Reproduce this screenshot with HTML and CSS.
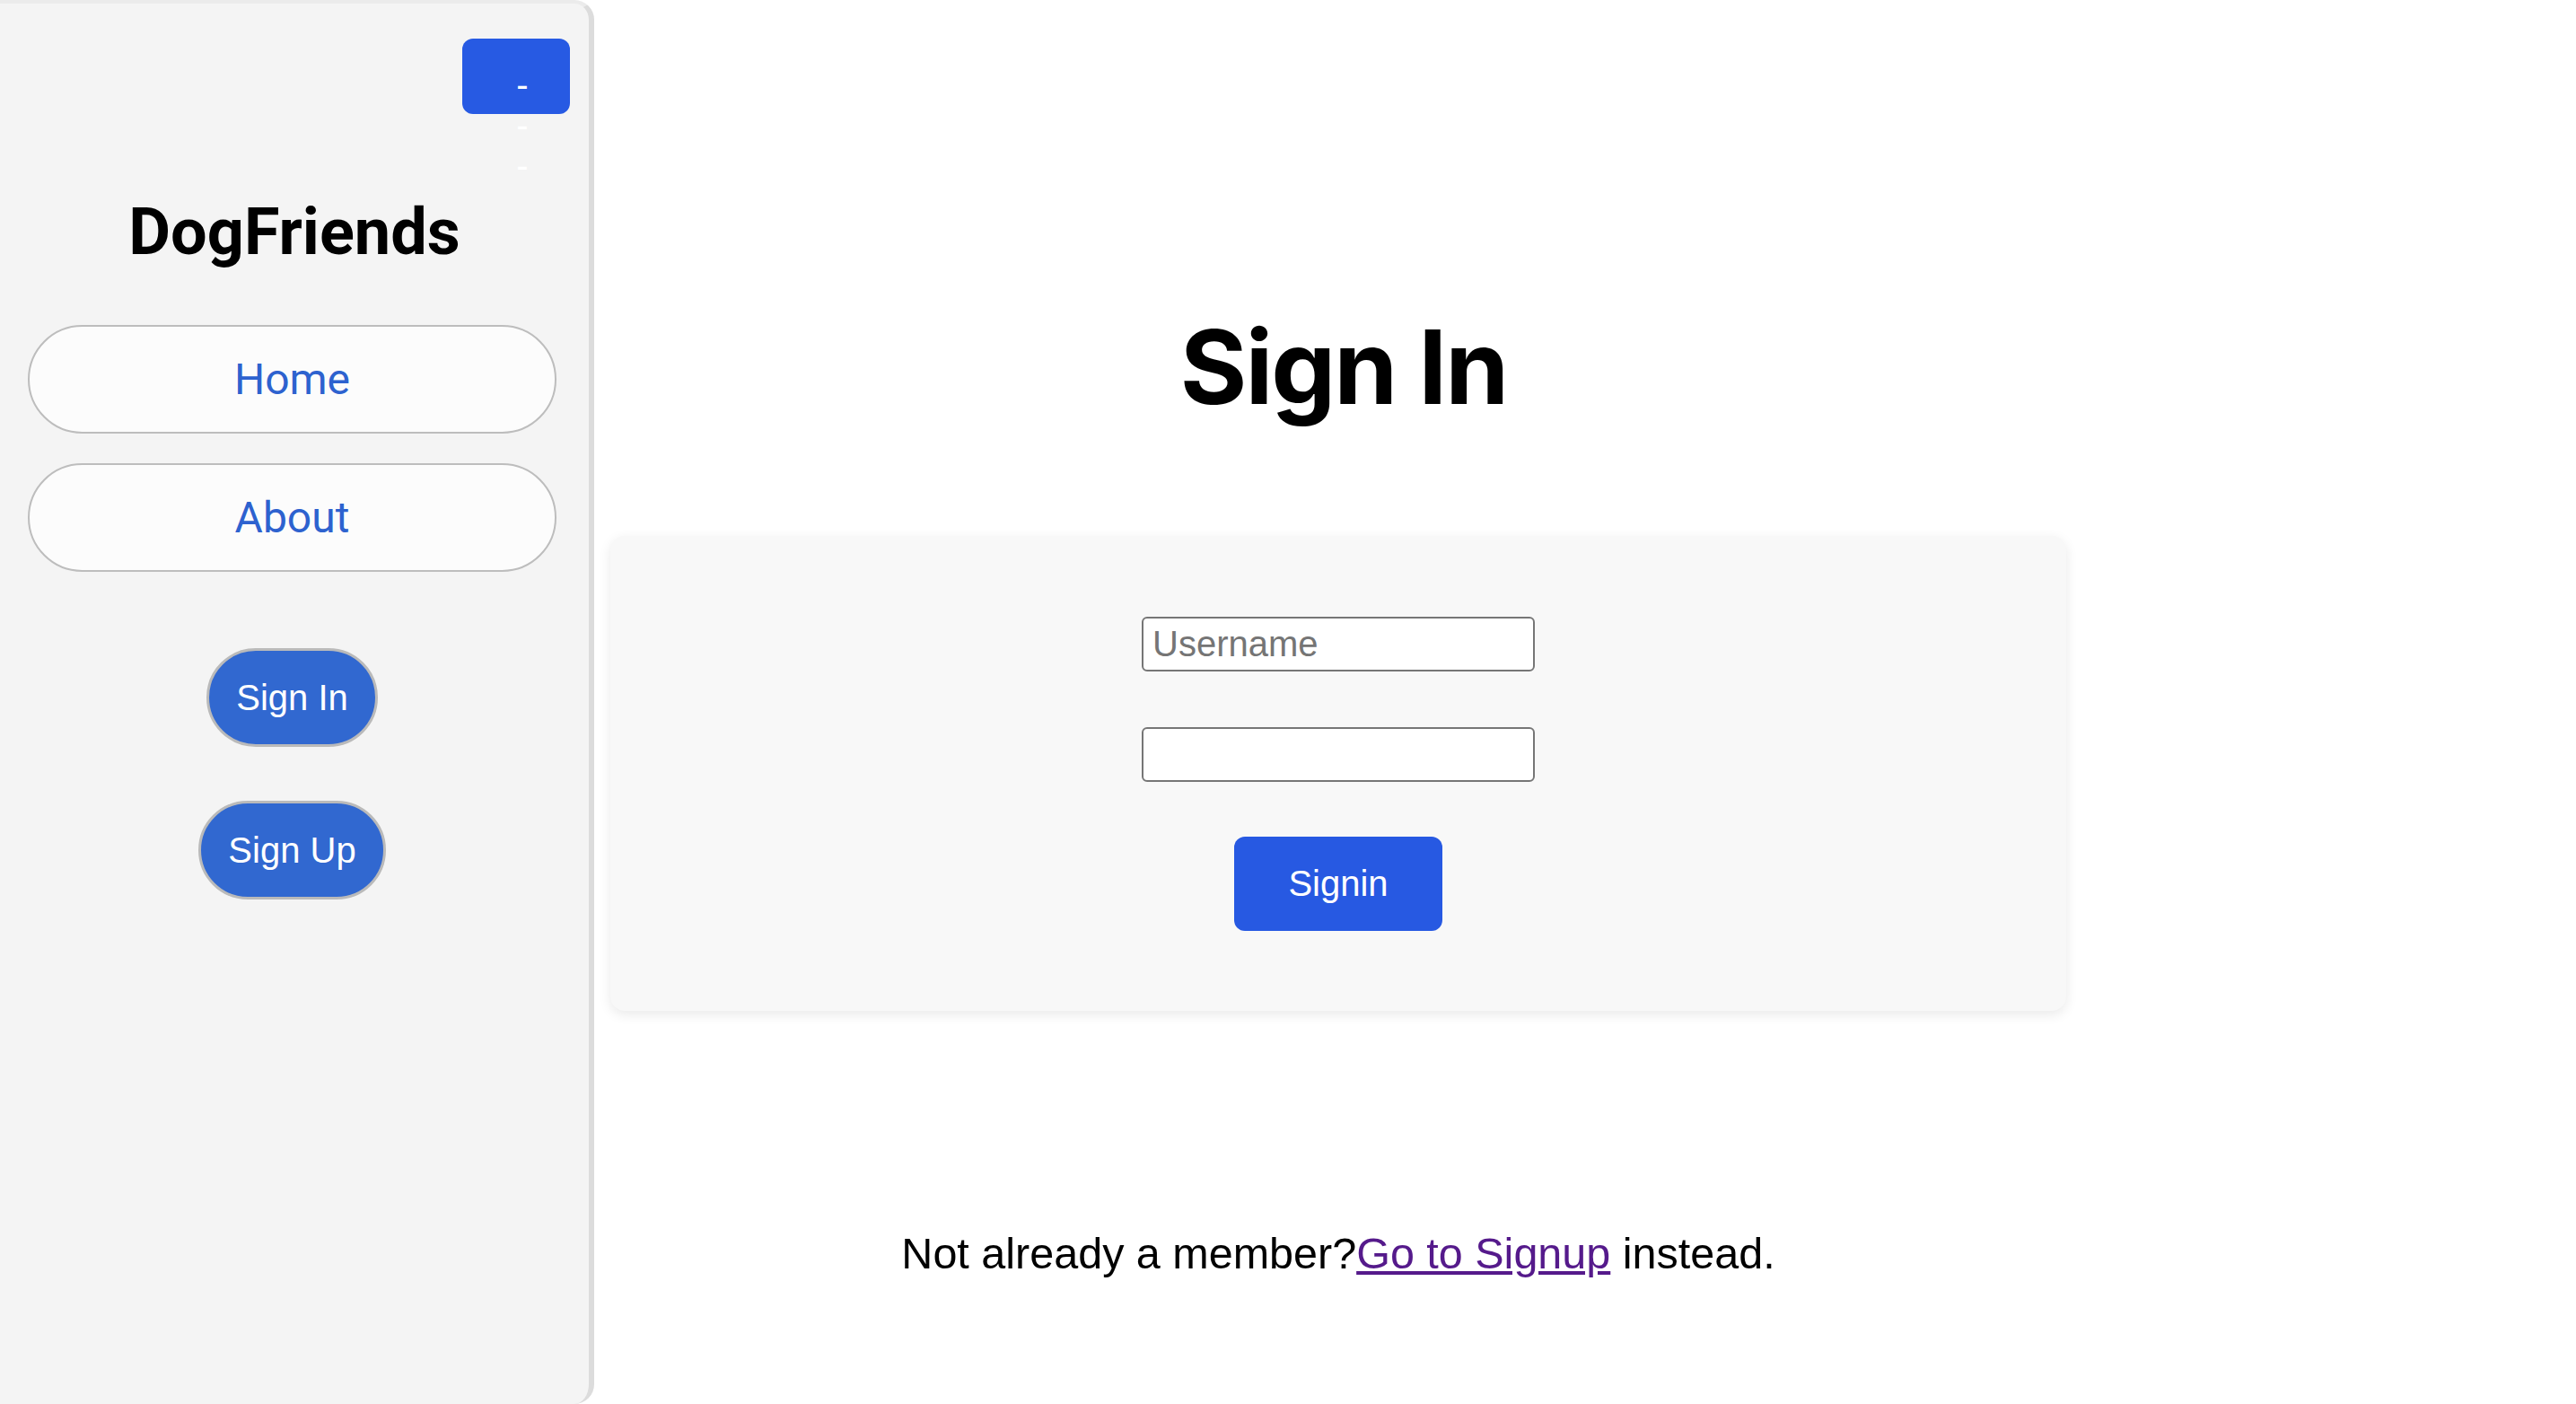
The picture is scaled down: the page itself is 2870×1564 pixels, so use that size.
FILE: index.html
```html
<!DOCTYPE html>
<html lang="en">
<head>
<meta charset="utf-8">
<title>DogFriends - Sign In</title>
<link rel="stylesheet" href="styles.css">
</head>
<body>
<div class="app">
  <aside class="sidebar">
    <div class="menu-row">
      <div class="menu-btn" role="button" aria-label="Menu"><span>-</span><span>-</span><span>-</span></div>
    </div>
    <h1 class="brand">DogFriends</h1>
    <nav class="nav">
      <a class="nav-link" href="#">Home</a>
      <a class="nav-link" href="#">About</a>
    </nav>
    <div class="auth">
      <a class="pill" href="#">Sign In</a>
      <a class="pill" href="#">Sign Up</a>
    </div>
  </aside>
  <main class="main">
    <div class="column">
      <h2 class="title">Sign In</h2>
      <form class="card">
        <input class="field" type="text" placeholder="Username">
        <input class="field" type="password">
        <button class="submit" type="button">Signin</button>
      </form>
      <p class="footnote">Not already a member?<a class="link" href="#">Go to Signup</a> instead.</p>
    </div>
  </main>
</div>
</body>
</html>
```
FILE: styles.css
```css
html, body {
  margin: 0;
  padding: 0;
  background: #ffffff;
}

.app {
  display: flex;
  min-height: 100vh;
}

.sidebar {
  box-sizing: border-box;
  width: 662px;
  height: 100vh;
  flex: none;
  background: #f4f4f4;
  border-top: 4px solid #ebebeb;
  border-right: 6px solid #dcdcdc;
  border-radius: 0 22px 22px 0;
}

.menu-row {
  display: flex;
  justify-content: flex-end;
  padding: 39px 21px 0 0;
}

.menu-btn {
  box-sizing: border-box;
  width: 120px;
  height: 84px;
  border-radius: 12px;
  background: #275ae3;
  color: #ffffff;
  font: 40px/45px "Liberation Sans", Arial, sans-serif;
  padding: 29px 0 0 14px;
  display: flex;
  flex-direction: column;
  align-items: center;
}

.menu-btn span {
  display: block;
  height: 45px;
}

.brand {
  margin: 90px 0 0;
  font: 700 72px/84px Roboto, "Liberation Sans", sans-serif;
  text-align: center;
  color: #000000;
}

.nav {
  display: flex;
  flex-direction: column;
  gap: 33px;
  margin-top: 61px;
  padding: 0 36px 0 31px;
}

.nav-link {
  box-sizing: border-box;
  height: 121px;
  display: flex;
  align-items: center;
  justify-content: center;
  border: 2px solid #bdbdbd;
  border-radius: 61px;
  background: #fcfcfc;
  color: #2d62cf;
  font: 400 48px Roboto, "Liberation Sans", sans-serif;
  text-decoration: none;
}

.auth {
  display: flex;
  flex-direction: column;
  align-items: center;
  gap: 60px;
  margin-top: 85px;
  padding: 0 36px 0 31px;
}

.pill {
  box-sizing: border-box;
  height: 110px;
  display: inline-flex;
  align-items: center;
  padding: 0 30px;
  border: 3px solid #bababa;
  border-radius: 55px;
  background: #3168d0;
  color: #ffffff;
  font: 40px "Liberation Sans", Arial, sans-serif;
  text-decoration: none;
}

.main {
  flex: 1;
  padding: 340px 0 0 18px;
}

.column {
  width: 1622px;
  display: flex;
  flex-direction: column;
  align-items: center;
}

.title {
  margin: 0;
  font: 700 114px/138px Inter, "Liberation Sans", sans-serif;
  letter-spacing: -2px;
  padding-left: 12px;
  color: #000000;
}

.card {
  align-self: stretch;
  margin-top: 119px;
  background: #f8f8f8;
  border-radius: 16px;
  box-shadow: 0 4px 14px rgba(0, 0, 0, 0.09);
  padding: 90px 0 89px;
  display: flex;
  flex-direction: column;
  align-items: center;
  gap: 62px;
}

.field {
  box-sizing: border-box;
  width: 438px;
  height: 61px;
  margin: 0;
  border: 2px solid #767676;
  border-radius: 6px;
  padding: 0 10px;
  background: #ffffff;
  font: 40px "Liberation Sans", Arial, sans-serif;
  color: #000000;
}

.field::placeholder {
  color: #757575;
}

.submit {
  width: 232px;
  height: 105px;
  border: none;
  border-radius: 12px;
  background: #2759e2;
  color: #ffffff;
  font: 40px "Liberation Sans", Arial, sans-serif;
  margin-top: -1px;
}

.footnote {
  margin: 243px 0 0;
  font: 48.5px/55px "Liberation Sans", Arial, sans-serif;
  color: #000000;
}

.link {
  color: #551a8b;
  text-decoration: underline;
}
```
